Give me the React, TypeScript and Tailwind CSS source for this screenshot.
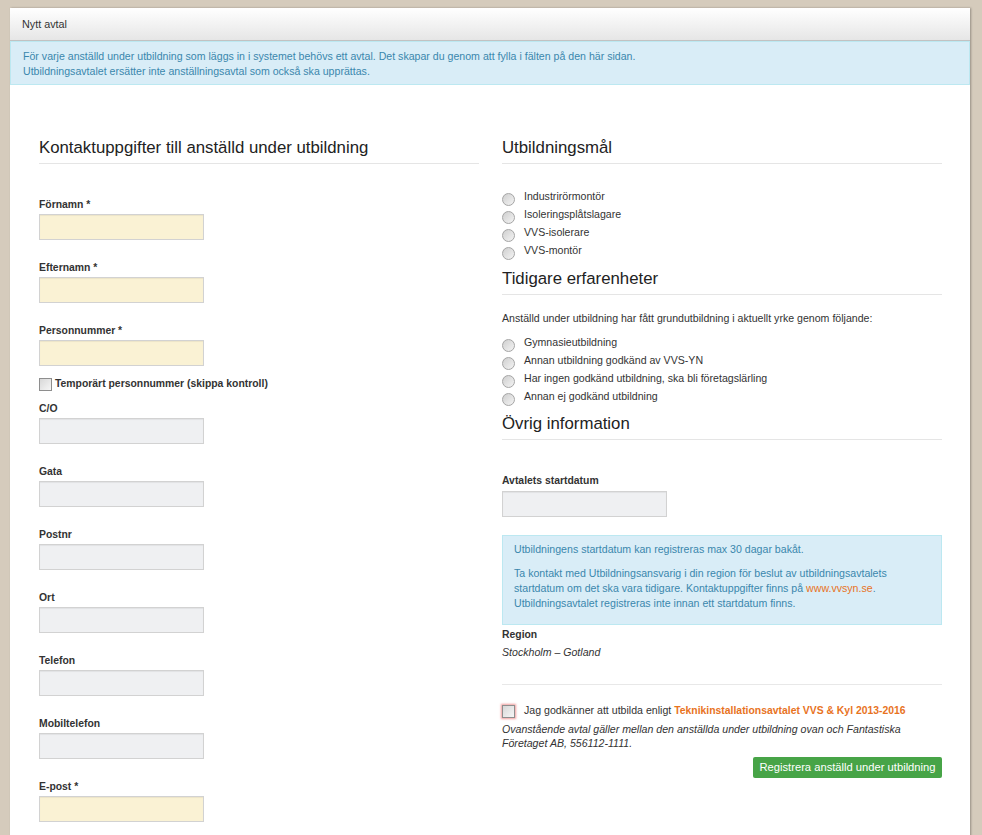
import React from "react";

const Heading = ({ children, className = "" }: { children: React.ReactNode; className?: string }) => (
  <div className={`text-[16.8px] leading-[20px] text-[#222] pb-[5px] border-b border-[#e5e5e5] ${className}`}>{children}</div>
);

const Field = ({ label, req, yellow, first }: { label: string; req?: boolean; yellow?: boolean; first?: boolean }) => (
  <div className={first ? "mt-[34px]" : "mt-[21px]"}>
    <div className="text-[10.4px] leading-[14px] font-bold text-[#333]">
      {label}
      {req ? " *" : ""}
    </div>
    <div
      className={`mt-[2px] h-[26px] w-[165px] border border-[#d2d2d2] shadow-[inset_0_1px_1px_rgba(0,0,0,0.06)] ${
        yellow ? "bg-[#faf2d4]" : "bg-[#eff0f2]"
      }`}
    />
  </div>
);

const Radio = ({ label }: { label: string }) => (
  <div className="flex items-center h-[18px] text-[10.6px] text-[#333]">
    <span className="w-[13px] h-[13px] rounded-full border border-[#a5a5a5] bg-gradient-to-br from-[#cfcfcf] to-[#f4f4f4] translate-y-[2px] shrink-0" />
    <span className="ml-[9px]">{label}</span>
  </div>
);

const Checkbox = ({ red }: { red?: boolean }) => (
  <span
    className={`w-[13px] h-[13px] border border-[#8e8e8e] bg-gradient-to-br from-[#d8d8d8] to-[#f6f6f6] shrink-0 ${
      red ? "shadow-[0_0_2px_1px_rgba(230,90,90,0.6)]" : ""
    }`}
  />
);

export default function App() {
  return (
    <div className="min-h-[835px] bg-[#d5cbbc] pt-[8px] pl-[10px] font-['Liberation_Sans',Arial,sans-serif]">
      <div className="w-[960px] bg-white shadow-[1px_0_2px_rgba(0,0,0,0.3)] pb-[40px]">
        <div className="h-[33px] border-b border-[#c2c2c2] bg-gradient-to-b from-[#ffffff] to-[#e6e6e6] flex items-center pl-[12px] text-[10.8px] text-[#333]">
          Nytt avtal
        </div>
        <div className="border border-[#bce8f1] bg-[#d9edf7] pt-[7px] pb-[5px] pl-[12px] text-[10.6px] leading-[15px] text-[#3a87ad]">
          För varje anställd under utbildning som läggs in i systemet behövs ett avtal. Det skapar du genom att fylla i fälten på den här sidan.
          <br />
          Utbildningsavtalet ersätter inte anställningsavtal som också ska upprättas.
        </div>

        <div className="flex pl-[29px] pt-[53px] gap-[23px]">
          {/* Left column */}
          <div className="w-[440px]">
            <Heading>Kontaktuppgifter till anställd under utbildning</Heading>
            <Field label="Förnamn" req yellow first />
            <Field label="Efternamn" req yellow />
            <Field label="Personnummer" req yellow />
            <div className="mt-[11px] flex items-center h-[14px] text-[10.4px] font-bold text-[#333]">
              <Checkbox />
              <span className="ml-[3px]">Temporärt personnummer (skippa kontroll)</span>
            </div>
            <div className="mt-[11px]">
              <div className="text-[10.4px] leading-[14px] font-bold text-[#333]">C/O</div>
              <div className="mt-[2px] h-[26px] w-[165px] border border-[#d2d2d2] shadow-[inset_0_1px_1px_rgba(0,0,0,0.06)] bg-[#eff0f2]" />
            </div>
            <Field label="Gata" />
            <Field label="Postnr" />
            <Field label="Ort" />
            <Field label="Telefon" />
            <Field label="Mobiltelefon" />
            <Field label="E-post" req yellow />
          </div>

          {/* Right column */}
          <div className="w-[440px] text-[#333]">
            <Heading>Utbildningsmål</Heading>
            <div className="mt-[24px]">
              <Radio label="Industrirörmontör" />
              <Radio label="Isoleringsplåtslagare" />
              <Radio label="VVS-isolerare" />
              <Radio label="VVS-montör" />
            </div>
            <Heading className="mt-[9px]">Tidigare erfarenheter</Heading>
            <p className="mt-[16px] text-[10.6px] leading-[15px]">
              Anställd under utbildning har fått grundutbildning i aktuellt yrke genom följande:
            </p>
            <div className="mt-[8px]">
              <Radio label="Gymnasieutbildning" />
              <Radio label="Annan utbildning godkänd av VVS-YN" />
              <Radio label="Har ingen godkänd utbildning, ska bli företagslärling" />
              <Radio label="Annan ej godkänd utbildning" />
            </div>
            <Heading className="mt-[8px]">Övrig information</Heading>
            <div className="mt-[34px] text-[10.4px] leading-[14px] font-bold">Avtalets startdatum</div>
            <div className="mt-[3px] h-[26px] w-[165px] border border-[#d2d2d2] shadow-[inset_0_1px_1px_rgba(0,0,0,0.06)] bg-[#eff0f2]" />
            <div className="mt-[18px] border border-[#bce8f1] bg-[#d9edf7] pt-[6px] pb-[13px] px-[11px] text-[10.6px] leading-[15px] text-[#3a87ad]">
              <p>Utbildningens startdatum kan registreras max 30 dagar bakåt.</p>
              <p className="mt-[9px]">
                Ta kontakt med Utbildningsansvarig i din region för beslut av utbildningsavtalets
                <br />
                startdatum om det ska vara tidigare. Kontaktuppgifter finns på{" "}
                <span className="text-[#e8731e]">www.vvsyn.se</span>.
                <br />
                Utbildningsavtalet registreras inte innan ett startdatum finns.
              </p>
            </div>
            <div className="mt-[3px] text-[10.4px] leading-[14px] font-bold">Region</div>
            <div className="mt-[3px] text-[10.6px] leading-[15px] italic">Stockholm – Gotland</div>
            <div className="mt-[24px] border-t border-[#e8e8e8]" />
            <div className="mt-[19px] flex items-center h-[14px] text-[10.6px]">
              <Checkbox red />
              <span className="ml-[9px]">
                Jag godkänner att utbilda enligt{" "}
                <span className="font-bold text-[#e8731e] text-[10.4px]">Teknikinstallationsavtalet VVS &amp; Kyl 2013-2016</span>
              </span>
            </div>
            <p className="mt-[4px] text-[10.6px] leading-[14px] italic">
              Ovanstående avtal gäller mellan den anställda under utbildning ovan och Fantastiska
              <br />
              Företaget AB, 556112-1111.
            </p>
            <div className="mt-[7px] flex justify-end">
              <button className="h-[21px] w-[189px] rounded-[2px] bg-[#47a447] text-white text-[11.2px] leading-[21px]">
                Registrera anställd under utbildning
              </button>
            </div>
          </div>
        </div>
      </div>
    </div>
  );
}
